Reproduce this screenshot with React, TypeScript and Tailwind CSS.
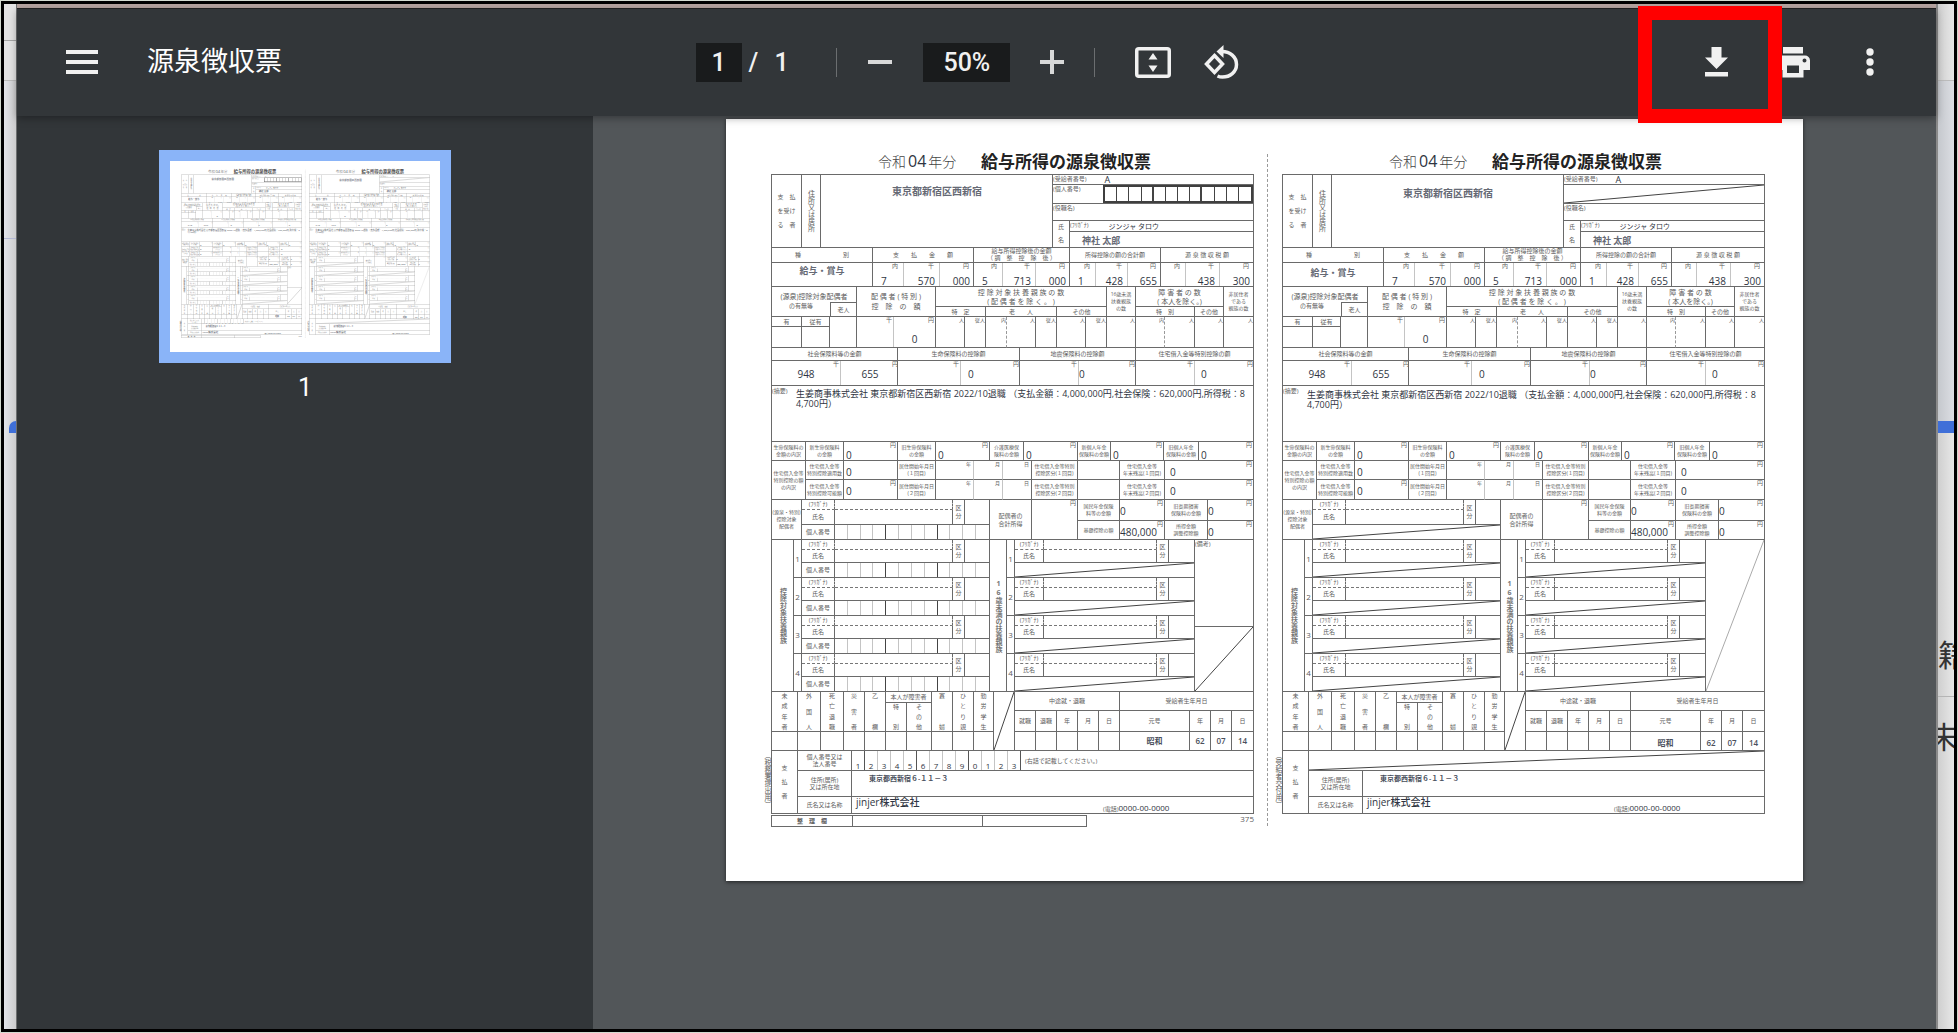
import type { ReactNode } from "react";
import clsx from "clsx";

/* ---------- small building blocks for the tax form ---------- */

type BoxProps = { className?: string; children?: ReactNode };

// one ruled box: draws its own right and bottom line
const Box = ({ className, children }: BoxProps) => (
  <div className={clsx("relative min-w-0 overflow-hidden whitespace-nowrap border-b border-r border-[#6a6a6a]", className)}>
    {children}
  </div>
);

const Label = ({ className, children }: BoxProps) => (
  <Box className={clsx("flex flex-col items-center text-center", className?.includes("justify-between") ? "" : "justify-center", className)}>
    {children}
  </Box>
);

// amount box with its unit in the top right corner
const Amount = ({ unit = "", value = "", className }: { unit?: string; value?: string; className?: string }) => (
  <div className={clsx("flex min-w-0 flex-col overflow-hidden", className)}>
    <span className="h-[6px] pr-px text-right text-[6px] leading-[6px]">{unit}</span>
    <span className="text-[10px] font-medium leading-[10px] text-[#2f3542]">{value}</span>
  </div>
);

const Slash = ({ light = false }: { light?: boolean }) => (
  <svg className="absolute inset-0 h-full w-full" viewBox="0 0 100 100" preserveAspectRatio="none" aria-hidden="true">
    <line x1="0" y1="100" x2="100" y2="0" stroke={light ? "#aaaaaa" : "#444444"} strokeWidth="1" vectorEffect="non-scaling-stroke" />
  </svg>
);

const NumberBoxes = () => (
  <div className="grid h-full grid-cols-12">
    {Array.from({ length: 12 }, (_, i) => (
      <span
        key={i}
        className={clsx(i < 11 && "border-r", i % 4 === 3 ? "border-[#444]" : "border-[#c4c4c4]")}
      />
    ))}
  </div>
);

const Person = ({ slashed, right = false }: { slashed: boolean; right?: boolean }) => (
  <div className="flex flex-col">
    <div
      className={clsx(
        "grid grid-rows-[10px_13px]",
        right ? "grid-cols-[29px_113px_12px_26px]" : "grid-cols-[33px_118px_12px_25px]"
      )}
    >
      <div className="border-b border-r border-dashed border-b-[#777] border-r-[#6a6a6a] text-center text-[6px] leading-[9px]">(ﾌﾘｶﾞﾅ)</div>
      <div className="border-b border-r border-dashed border-b-[#777] border-r-[#6a6a6a]" />
      <Label className="row-span-2 text-[6px] leading-[8px]">
        <span>区</span>
        <span>分</span>
      </Label>
      <Box className="row-span-2" />
      <Label>氏名</Label>
      <Box />
    </div>
    {slashed ? (
      <Box className="h-[15px]">
        <Slash />
      </Box>
    ) : (
      <div className="grid h-[15px] grid-cols-[33px_155px]">
        <Label>個人番号</Label>
        <Box>
          <NumberBoxes />
        </Box>
      </div>
    )}
  </div>
);

const DEPENDENTS = ["1", "2", "3", "4"];

const PAYMENTS = [
  { cols: "grid-cols-[31px_36px_34px]", parts: ["7", "570", "000"] },
  { cols: "grid-cols-[29px_33px_34px]", parts: ["5", "713", "000"] },
  { cols: "grid-cols-[26px_32px_33px]", parts: ["1", "428", "655"] },
  { cols: "grid-cols-[25px_34px_34px]", parts: ["", "438", "300"] },
];

const UNITS = ["内", "千", "円"];

const COUNTS = [
  { unit: "人", dashed: false },
  { unit: "従人", dashed: false },
  { unit: "内", dashed: true },
  { unit: "人", dashed: false },
  { unit: "従人", dashed: false },
  { unit: "人", dashed: false },
  { unit: "従人", dashed: false },
  { unit: "人", dashed: false },
  { unit: "内", dashed: true },
  { unit: "人", dashed: false },
  { unit: "人", dashed: false },
  { unit: "人", dashed: false },
];

const INSURANCE = [
  { cols: "grid-cols-[69px_58px]", parts: ["948", "655"], pad: "" },
  { cols: "grid-cols-[63px_59px]", parts: ["", "0"], pad: "pl-[7px] text-left" },
  { cols: "grid-cols-[59px_57px]", parts: ["", "0"], pad: "text-left" },
  { cols: "grid-cols-[59px_59px]", parts: ["", "0"], pad: "pl-[6px] text-left" },
];

const BREAKDOWN = [
  { top: "新生命保険料", bottom: "の金額" },
  { top: "旧生命保険料", bottom: "の金額" },
  { top: "介護医療保", bottom: "険料の金額" },
  { top: "新個人年金", bottom: "保険料の金額" },
  { top: "旧個人年金", bottom: "保険料の金額" },
];

const FLAGS = ["未成年者", "外国人", "死亡退職", "災害者", "乙欄"];
const FLAGS_END = ["寡婦", "ひとり親", "勤労学生"];

const Certificate = ({ copy = false }: { copy?: boolean }) => (
  <section className="w-[483px] text-[6px] leading-[8px] text-[#5c5c5c]">
    <header className="flex h-[55px] items-end whitespace-nowrap pb-[2px] pl-[107px]">
      <p className="w-[103px] text-[14px] font-light leading-[20px] text-[#444]">
        令和<span className="px-[2px] text-[16px] font-normal text-[#2f3542]">04</span>年分
      </p>
      <h2 className="text-[17px] font-bold leading-[20px] text-[#222]">給与所得の源泉徴収票</h2>
    </header>

    <div className="relative border-l border-t border-[#6a6a6a]">
      {/* payee */}
      <div className="grid h-[73px] grid-cols-[30px_19px_232px_201px]">
        <Label className="leading-[14px]">
          <span>支　払</span>
          <span>を受け</span>
          <span>る　者</span>
        </Label>
        <Label className="text-[7px] leading-[7px] [&>span]:[writing-mode:vertical-rl]">
          <span>住所又は居所</span>
        </Label>
        <Box className={clsx("pl-[71px] text-[10px] leading-[12px]", copy ? "pt-[12px]" : "pt-[10px]")}>
          <span className="font-bold text-[#666a75]">東京都新宿区西新宿</span>
        </Box>
        <div className="grid grid-rows-[10px_19px_17px_27px]">
          <Box className="flex items-start gap-[18px] leading-[8px]">
            <span>(受給者番号)</span>
            <span className="text-[9px] leading-[10px] text-[#2f3542]">A</span>
          </Box>
          {copy ? (
            <Box>
              <Slash />
            </Box>
          ) : (
            <Box className="grid grid-cols-[50px_150px]">
              <span>(個人番号)</span>
              <div className="grid grid-cols-12 border-2 border-[#3f3f3f]">
                {Array.from({ length: 12 }, (_, i) => (
                  <span key={i} className={clsx("border-[#444]", i < 11 && "border-r", i % 4 === 3 && i < 11 && "border-r-2")} />
                ))}
              </div>
            </Box>
          )}
          <Box>(役職名)</Box>
          <div className="grid grid-cols-[17px_184px] grid-rows-[11px_16px]">
            <Label className="row-span-2 leading-[13px]">
              <span>氏</span>
              <span>名</span>
            </Label>
            <Box className="flex gap-[20px] leading-[8px]">
              <span>(ﾌﾘｶﾞﾅ)</span>
              <span className="text-[7px] leading-[11px] text-[#2f3542]">ジンジャ タロウ</span>
            </Box>
            <Box className="pl-[12px] pt-[3px] text-[9px] font-bold leading-[12px] text-[#666a75]">神社 太郎</Box>
          </div>
        </div>
      </div>

      {/* payment amounts */}
      <div className="grid grid-cols-[101px_101px_96px_91px_93px] grid-rows-[15px_24px]">
        <Label>種　　　　　　　別</Label>
        <Label>支　　払　　金　　額</Label>
        <Label className="leading-[7px]">
          <span>給与所得控除後の金額</span>
          <span>（ 調　整　控　除　後 ）</span>
        </Label>
        <Label>所得控除の額の合計額</Label>
        <Label>源 泉 徴 収 税 額</Label>
        <Box className={clsx("text-center text-[9px] font-bold leading-[12px] text-[#666a75]", copy ? "pt-[4px]" : "pt-[2px]")}>
          給与・賞与
        </Box>
        {PAYMENTS.map((item, i) => (
          <Box key={i} className={clsx("grid", item.cols)}>
            {item.parts.map((part, n) => (
              <Amount
                key={n}
                unit={UNITS[n]}
                value={part}
                className={clsx("justify-between pr-[4px]", n < 2 && "border-r border-[#c4c4c4]", n > 0 ? "text-right" : "pl-[8px]")}
              />
            ))}
          </Box>
        ))}
      </div>

      {/* dependents head counts */}
      <div className="grid h-[30px] grid-cols-[85px_79px_171px_29px_88px_30px]">
        <Box>
          <p className="pt-[5px] text-center text-[7px] leading-[10px]">(源泉)控除対象配偶者</p>
          <div className="flex">
            <span className="w-[58px] text-center">の有無等</span>
            <span className="h-[15px] flex-1 border-l border-t border-[#6a6a6a] text-center leading-[14px]">老人</span>
          </div>
        </Box>
        <Label className="text-[7px] leading-[10px]">
          <span>配 偶 者 ( 特 別 )</span>
          <span>控　除　の　額</span>
        </Label>
        <div className="grid grid-cols-[50px_71px_50px] grid-rows-[20px_10px]">
          <Label className="col-span-3 text-[7px] leading-[9px]">
            <span>控 除 対 象 扶 養 親 族 の 数</span>
            <span>( 配 偶 者 を 除 く 。 )</span>
          </Label>
          <Label>特　定</Label>
          <Label>老　　人</Label>
          <Label>その他</Label>
        </div>
        <Label className="text-[5px] leading-[7px]">
          <span>16歳未満</span>
          <span>扶養親族</span>
          <span>の数</span>
        </Label>
        <div className="grid grid-cols-[59px_29px] grid-rows-[20px_10px]">
          <Label className="col-span-2 text-[7px] leading-[9px]">
            <span>障 害 者 の 数</span>
            <span>( 本人を除く。)</span>
          </Label>
          <Label>特　別</Label>
          <Label>その他</Label>
        </div>
        <Label className="text-[5px] leading-[7px]">
          <span>非居住者</span>
          <span>である</span>
          <span>親族の数</span>
        </Label>
      </div>
      <div className="grid h-[31px] grid-cols-[58px_27px_79px_29px_21px_21px_29px_21px_29px_21px_29px_29px_30px_29px_30px]">
        <div className="grid grid-cols-[30px_28px] grid-rows-[10px_21px]">
          <Label>有</Label>
          <Label>従有</Label>
          <Box />
          <Box />
        </div>
        <Box />
        <Box className="grid grid-cols-[37px_41px]">
          <Amount unit="千" className="border-r border-[#c4c4c4]" />
          <Amount unit="円" value="0" className="justify-between pb-[3px] text-center" />
        </Box>
        {COUNTS.map((count, i) => (
          <Box key={i} className={clsx("text-right text-[5px] leading-[7px]", count.dashed && "border-r-[#999] [border-right-style:dashed]")}>
            {count.unit}
          </Box>
        ))}
      </div>

      {/* insurance totals */}
      <div className="grid grid-cols-[126px_122px_116px_118px] grid-rows-[13px_25px]">
        <Label>社会保険料等の金額</Label>
        <Label>生命保険料の控除額</Label>
        <Label>地震保険料の控除額</Label>
        <Label>住宅借入金等特別控除の額</Label>
        {INSURANCE.map((item, i) => (
          <Box key={i} className={clsx("grid", item.cols)}>
            <Amount unit="千" value={item.parts[0]} className="gap-[2px] border-r border-[#c4c4c4] text-center" />
            <Amount unit="円" value={item.parts[1]} className={clsx("gap-[2px] text-center", item.pad)} />
          </Box>
        ))}
      </div>

      {/* remarks */}
      <Box className="flex h-[56px]">
        <span className="w-[24px] leading-[10px]">(摘要)</span>
        <p className={clsx("text-[9px] leading-[10px] text-[#2f3542]", copy ? "pt-[4px]" : "pt-[3px]")}>
          生姜商事株式会社 東京都新宿区西新宿 2022/10退職 （支払金額：4,000,000円,社会保険：620,000円,所得税：8
          <br />
          4,700円）
        </p>
      </Box>

      {/* deduction breakdown */}
      <div className="grid h-[19px] grid-cols-[34px_38px_54px_38px_54px_34px_54px_33px_53px_35px_55px] text-[5px] leading-[7px]">
        <Label>
          <span>生命保険料の</span>
          <span>金額の内訳</span>
        </Label>
        {BREAKDOWN.map((item) => (
          <div key={item.top} className="contents">
            <Label>
              <span>{item.top}</span>
              <span>{item.bottom}</span>
            </Label>
            <Box>
              <Amount unit="円" value="0" className="gap-[2px] pl-[2px]" />
            </Box>
          </div>
        ))}
      </div>
      <div className="grid h-[39px] grid-cols-[34px_448px] text-[5px] leading-[7px]">
        <Label>
          <span>住宅借入金等</span>
          <span>特別控除の額</span>
          <span>の内訳</span>
        </Label>
        <div className="grid grid-cols-[38px_54px_38px_38px_29px_29px_46px_42px_45px_89px] grid-rows-[19px_20px]">
          {["１回目", "２回目"].map((turn, i) => (
            <div key={turn} className="contents">
              <Label>
                <span>住宅借入金等</span>
                <span>{i === 0 ? "特別控除適用数" : "特別控除可能額"}</span>
              </Label>
              <Box>
                <Amount unit={i === 0 ? "" : "円"} value="0" className="pl-[2px]" />
              </Box>
              <Label>
                <span>居住開始年月日</span>
                <span>({turn})</span>
              </Label>
              <Box className="border-r-[#c4c4c4] pr-[2px] text-right">年</Box>
              <Box className="border-r-[#c4c4c4] pr-[2px] text-right">月</Box>
              <Box className="pr-[2px] text-right">日</Box>
              <Label>
                <span>住宅借入金等特別</span>
                <span>控除区分({turn})</span>
              </Label>
              <Box />
              <Label>
                <span>住宅借入金等</span>
                <span>年末残高({turn})</span>
              </Label>
              <Box>
                <Amount unit="円" value="0" className="pl-[5px]" />
              </Box>
            </div>
          ))}
        </div>
      </div>

      {/* spouse */}
      <div className="grid h-[40px] grid-cols-[30px_188px_42px_46px_176px]">
        <Label className="text-[5px] leading-[7px]">
          <span>(源泉・特別)</span>
          <span>控除対象</span>
          <span>配偶者</span>
        </Label>
        <div className="[&>div>:first-child]:grid-rows-[10px_15px]">
          <Person slashed={copy} />
        </div>
        <Label>
          <span>配偶者の</span>
          <span>合計所得</span>
        </Label>
        <Box>
          <Amount unit="円" />
        </Box>
        <div className="grid grid-cols-[42px_45px_43px_46px] grid-rows-[21px_19px] text-[5px] leading-[7px]">
          <Label>
            <span>国民年金保険</span>
            <span>料等の金額</span>
          </Label>
          <Box>
            <Amount unit="円" value="0" />
          </Box>
          <Label>
            <span>旧長期損害</span>
            <span>保険料の金額</span>
          </Label>
          <Box>
            <Amount unit="円" value="0" />
          </Box>
          <Label>基礎控除の額</Label>
          <Box>
            <Amount unit="円" value="480,000" />
          </Box>
          <Label>
            <span>所得金額</span>
            <span>調整控除額</span>
          </Label>
          <Box>
            <Amount unit="円" value="0" />
          </Box>
        </div>
      </div>

      {/* dependents */}
      <div className="grid h-[152px] grid-cols-[22px_8px_188px_17px_8px_180px_59px]">
        <Label className="text-[7px] font-bold text-[#777] [&>span]:[writing-mode:vertical-rl]">
          <span>控除対象扶養親族</span>
        </Label>
        <div className="grid grid-rows-4 text-[8px]">
          {DEPENDENTS.map((no) => (
            <Label key={no}>{no}</Label>
          ))}
        </div>
        <div>
          {DEPENDENTS.map((no) => (
            <Person key={no} slashed={copy} />
          ))}
        </div>
        <Label className="text-[7px] font-bold text-[#777] [&>span]:[text-orientation:upright] [&>span]:[writing-mode:vertical-rl]">
          <span>16歳未満の扶養親族</span>
        </Label>
        <div className="grid grid-rows-4 text-[8px]">
          {DEPENDENTS.map((no) => (
            <Label key={no}>{no}</Label>
          ))}
        </div>
        <div>
          {DEPENDENTS.map((no) => (
            <Person key={no} slashed right />
          ))}
        </div>
        {copy ? (
          <Box>
            <Slash light />
          </Box>
        ) : (
          <div className="grid grid-rows-[87px_65px]">
            <Box>(備考)</Box>
            <Box>
              <Slash />
            </Box>
          </div>
        )}
      </div>

      {/* status flags and birthday */}
      <div className="grid h-[59px] grid-cols-[222px_21px_239px]">
        <div className="grid grid-cols-[26px_23px_23px_21px_21px_21px_25px_21px_21px_20px] grid-rows-[11px_29px_19px]">
          {FLAGS.map((flag) => (
            <Label key={flag} className="row-span-2 justify-between">
              {flag.split("").map((char) => (
                <span key={char}>{char}</span>
              ))}
            </Label>
          ))}
          <Label className="col-span-2">本人が障害者</Label>
          {FLAGS_END.map((flag) => (
            <Label key={flag} className="row-span-2 justify-between">
              {flag.split("").map((char) => (
                <span key={char}>{char}</span>
              ))}
            </Label>
          ))}
          <Label className="justify-between">
            <span>特</span>
            <span>別</span>
          </Label>
          <Label className="justify-between">
            <span>そ</span>
            <span>の</span>
            <span>他</span>
          </Label>
          {Array.from({ length: 10 }, (_, i) => (
            <Box key={i} />
          ))}
        </div>
        <Box>
          <Slash />
        </Box>
        <div className="grid grid-cols-[21px_21px_21px_21px_21px_70px_21px_21px_22px] grid-rows-[19px_21px_19px]">
          <Label className="col-span-5">中途就・退職</Label>
          <Label className="col-span-4">受給者生年月日</Label>
          {["就職", "退職", "年", "月", "日", "元号", "年", "月", "日"].map((head, i) => (
            <Label key={i}>{head}</Label>
          ))}
          {["", "", "", "", "", "昭和", "62", "07", "14"].map((value, i) => (
            <Label key={i} className={clsx("text-[8px] font-semibold leading-[10px] text-[#4a4f5c]", copy && "pt-[4px]")}>
              {value}
            </Label>
          ))}
        </div>
      </div>

      {/* payer */}
      <div className="grid h-[63px] grid-cols-[26px_456px]">
        <Label className="leading-[14px]">
          <span>支</span>
          <span>払</span>
          <span>者</span>
        </Label>
        <div className="grid grid-cols-[54px_402px] grid-rows-[20px_26px_17px]">
          {copy ? (
            <Box className="col-span-2">
              <Slash />
            </Box>
          ) : (
            <>
              <Label className="leading-[7px]">
                <span>個人番号又は</span>
                <span>法人番号</span>
              </Label>
              <Box className="flex">
                {"1234567890123".split("").map((digit, i) => (
                  <span
                    key={i}
                    className={clsx(
                      "w-[13px] border-r pt-[10px] text-center text-[8px] font-medium leading-[10px] text-[#2f3542]",
                      i % 4 === 0 ? "border-[#555]" : "border-[#c4c4c4]"
                    )}
                  >
                    {digit}
                  </span>
                ))}
                <span className="pl-[4px] leading-[20px]">(右詰で記載してください。)</span>
              </Box>
            </>
          )}
          <Label className="leading-[7px]">
            <span>住所(居所)</span>
            <span>又は所在地</span>
          </Label>
          <Box className="pl-[17px] pt-[3px] text-[7px] font-semibold leading-[9px] text-[#4a4f5c]">東京都西新宿６-１１－３</Box>
          <Label>氏名又は名称</Label>
          <Box className="flex justify-between pl-[4px]">
            <span className="text-[10px] font-medium leading-[10px] text-[#2f3542]">jinjer株式会社</span>
            <span className="w-[150px] pt-[7px]">
              (電話)<span className="text-[8px] font-medium text-[#2f3542]">0000-00-0000</span>
            </span>
          </Box>
        </div>
      </div>

      {/* margin note along the left edge */}
      <span className="absolute -left-[9px] bottom-[6px] text-[7px] leading-[8px] [writing-mode:vertical-rl]">
        {copy ? "（受給者交付用）" : "（税務署提出用）"}
      </span>
    </div>

    {!copy && (
      <footer className="flex items-start justify-between pt-px">
        <div className="grid h-[12px] grid-cols-[81px_130px_104px] border-l border-t border-[#6a6a6a]">
          <Label className="font-bold">整　理　欄</Label>
          <Box />
          <Box />
        </div>
        <span className="text-[8px]">375</span>
      </footer>
    )}
  </section>
);

const DocumentPage = () => (
  <div className="flex h-[762px] w-[1077px] bg-white pl-[45px] font-['Open_Sans','Noto_Sans_CJK_JP',sans-serif]">
    <Certificate />
    <div className="mb-[55px] ml-[13px] mr-[14px] mt-[35px] border-l border-dashed border-[#999]" />
    <Certificate copy />
  </div>
);

/* ---------- viewer chrome ---------- */

const Toolbar = () => (
  <header className="relative z-10 grid h-[107px] shrink-0 grid-cols-[1fr_auto_1fr] items-center bg-[#323639] pb-px pr-[18px] text-[#f1f1f1] shadow-[0_2px_8px_rgba(0,0,0,0.35)]">
    <div className="flex items-center gap-[49px] pl-[49px]">
      <button type="button" aria-label="メニュー">
        <svg width="32" height="24" viewBox="0 0 32 24" fill="currentColor">
          <rect width="32" height="4" />
          <rect y="10" width="32" height="4" />
          <rect y="20" width="32" height="4" />
        </svg>
      </button>
      <h1 className="text-[27px] leading-[36px] text-white">源泉徴収票</h1>
    </div>

    <div className="flex items-center text-[25px] font-medium leading-[39px]">
      <input aria-label="ページ番号" defaultValue="1" className="h-[39px] w-[46px] bg-[#191b1c] text-center" />
      <span className="pl-[7px]">/</span>
      <span className="w-[48px] pl-[16px]">1</span>
      <span className="ml-[30px] mr-[31px] h-[29px] w-px bg-[#6b6e70]" />
      <button type="button" aria-label="縮小">
        <svg width="24" height="24" viewBox="0 0 24 24" fill="#d8d9d9">
          <rect y="10" width="24" height="4" />
        </svg>
      </button>
      <input aria-label="ズーム" defaultValue="50%" className="ml-[31px] mr-[30px] h-[39px] w-[87px] bg-[#191b1c] text-center" />
      <button type="button" aria-label="拡大">
        <svg width="24" height="24" viewBox="0 0 24 24" fill="#d8d9d9">
          <path d="M10 0h4v10h10v4H14v10h-4V14H0v-4h10z" />
        </svg>
      </button>
      <span className="ml-[30px] mr-[40px] h-[29px] w-px bg-[#6b6e70]" />
      <button type="button" aria-label="ページに合わせる">
        <svg width="36" height="31" viewBox="0 0 36 31" fill="none">
          <rect x="1.75" y="1.75" width="32.5" height="27.5" rx="2" stroke="currentColor" strokeWidth="3.5" />
          <path d="M18 6l4.500 6.500h-9zM18 25l4.500-6.500h-9z" fill="currentColor" />
        </svg>
      </button>
      <button type="button" aria-label="左に回転" className="ml-[33px]">
        <svg width="35" height="34" viewBox="0 0 35 34" fill="none" stroke="currentColor" strokeWidth="3.5">
          <path d="M10.5 10.5l8 8.500-8 8.500-8-8.500z" />
          <path d="M18 6.500c8 0 14.500 5.500 14.500 13S26 32 18.500 32c-2 0-3.500-.3-5-1" />
          <path d="M19.500 0v13l-7-6.500z" fill="currentColor" stroke="none" />
        </svg>
      </button>
    </div>

    <div className="flex items-center justify-end pr-[44px]">
      <button type="button" aria-label="ダウンロード">
        <svg width="23" height="30" viewBox="0 0 23 30" fill="currentColor">
          <path d="M6.500 0h10v10.500H23L11.500 22 0 10.500h6.500zM0 25h23v4.500H0z" />
        </svg>
      </button>
      <button type="button" aria-label="印刷" className="ml-[48px]">
        <svg width="34" height="31" viewBox="0 0 34 31" fill="currentColor">
          <path d="M7 0h20v6.500H7z" />
          <path
            fillRule="evenodd"
            d="M5 8.500h24a5 5 0 0 1 5 5V23h-6.500v7.500h-21V23H0v-9.500a5 5 0 0 1 5-5zM11 18.500V26h12v-7.500zM28.500 11.500a2 2 0 1 0 0 4 2 2 0 0 0 0-4z"
          />
        </svg>
      </button>
      <button type="button" aria-label="その他" className="ml-[56px]">
        <svg width="8" height="28" viewBox="0 0 8 28" fill="currentColor">
          <circle cx="4" cy="4" r="3.700" />
          <circle cx="4" cy="14" r="3.700" />
          <circle cx="4" cy="24" r="3.700" />
        </svg>
      </button>
    </div>

    {/* highlight around the download button */}
    <div className="absolute -top-[3px] right-[154px] h-[117px] w-[144px] border-[14px] border-[#ff0000]" />
  </header>
);

const Sidebar = () => (
  <nav className="flex w-[576px] shrink-0 flex-col items-center bg-[#323639] pt-[34px] text-white">
    <button type="button" aria-label="ページ 1" className="border-[11px] border-[#8ab4f8]">
      <div className="h-[191px] w-[270px] overflow-hidden bg-white text-left" aria-hidden="true">
        <div className="h-[762px] w-[1077px] origin-top-left scale-25 opacity-80">
          <DocumentPage />
        </div>
      </div>
    </button>
    <span className="pt-[9px] text-[25px] leading-[32px]">1</span>
  </nav>
);

export default function App() {
  return (
    <div className="h-screen overflow-hidden bg-[#d3dad0] p-px font-[Roboto,'Noto_Sans_CJK_JP',sans-serif]" lang="ja">
      <div className="flex h-full overflow-hidden border-[3px] border-black">
        <div className="flex w-[12px] shrink-0 flex-col bg-linear-to-r from-[#e3e5ea] to-[#cccccd]">
          <div className="h-[37px] border-b border-[#a5a5a5] bg-[#e4e4e4]" />
          <div className="h-[40px] border-b border-[#bbb] bg-[#e4e4e4]" />
          <div className="h-[158px] border-b border-[#b4b9d4]" />
          <div className="h-[182px]" />
          <div className="ml-[5px] h-[12px] rounded-tl-lg bg-[#3f6fd8]" />
        </div>

        <main className="flex min-w-0 flex-1 flex-col border-l border-[#6d6f70]">
          <div className="h-[5px] shrink-0 border-b border-[#222] bg-[#b7a5a1]" />
          <Toolbar />
          <div className="flex min-h-0 flex-1">
            <Sidebar />
            <div className="flex flex-1 justify-center overflow-hidden bg-[#525659] pt-[3px]">
              <div className="h-[762px] shadow-[0_1px_4px_rgba(0,0,0,0.6)]">
                <DocumentPage />
              </div>
            </div>
          </div>
        </main>

        <div className="flex w-[18px] shrink-0 flex-col overflow-hidden border-l-2 border-[#8a8a8a] bg-linear-to-r from-[#cfcfcf] to-[#e8e8e8] text-[30px] leading-[34px] text-[#333]">
          <div className="h-[77px] border-b border-[#bbb]" />
          <div className="h-[340px] bg-linear-to-r from-[#c5c8cd] to-[#dcdee3]" />
          <div className="h-[12px] shrink-0 bg-[#3f6fd8]" />
          <div className="h-[264px] shrink-0 border-b border-[#b5b5b5] pt-[206px]">籍</div>
          <div className="-ml-[9px] w-[34px] pt-[24px]">未</div>
        </div>
      </div>
    </div>
  );
}
